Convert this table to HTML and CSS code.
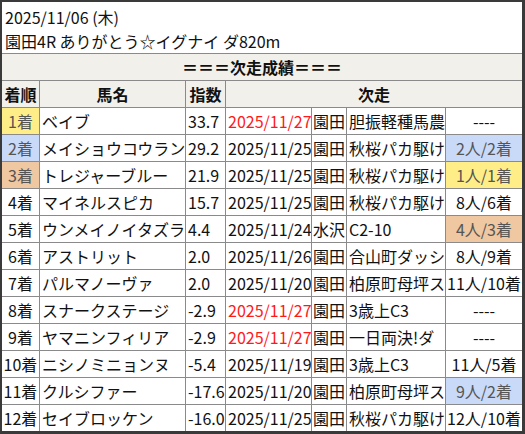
FILE: index.html
```html
<!DOCTYPE html>
<html lang="ja">
<head>
<meta charset="utf-8">
<title>次走成績</title>
<link rel="stylesheet" href="styles.css">
</head>
<body>
<div class="frame">
  <div class="title">
    <div>2025/11/06 (木)</div>
    <div>園田4R ありがとう☆イグナイ ダ820m</div>
  </div>
  <div class="grid">
    <div class="cell head span-all">＝＝＝次走成績＝＝＝</div>

    <div class="cell head">着順</div>
    <div class="cell head">馬名</div>
    <div class="cell head">指数</div>
    <div class="cell head span-next">次走</div>

    <div class="cell rank gold">1着</div><div class="cell">ベイブ</div><div class="cell">33.7</div><div class="cell date red">2025/11/27</div><div class="cell place">園田</div><div class="cell">胆振軽種馬農</div><div class="cell res">----</div>

    <div class="cell rank blue">2着</div><div class="cell">メイショウコウラン</div><div class="cell">29.2</div><div class="cell date">2025/11/25</div><div class="cell place">園田</div><div class="cell">秋桜パカ駆け</div><div class="cell res blue">2人/2着</div>

    <div class="cell rank bronze">3着</div><div class="cell">トレジャーブルー</div><div class="cell">21.9</div><div class="cell date">2025/11/25</div><div class="cell place">園田</div><div class="cell">秋桜パカ駆け</div><div class="cell res gold">1人/1着</div>

    <div class="cell rank">4着</div><div class="cell">マイネルスピカ</div><div class="cell">15.7</div><div class="cell date">2025/11/25</div><div class="cell place">園田</div><div class="cell">秋桜パカ駆け</div><div class="cell res">8人/6着</div>

    <div class="cell rank">5着</div><div class="cell">ウンメイノイタズラ</div><div class="cell">4.4</div><div class="cell date">2025/11/24</div><div class="cell place">水沢</div><div class="cell">C2-10</div><div class="cell res bronze">4人/3着</div>

    <div class="cell rank">6着</div><div class="cell">アストリット</div><div class="cell">2.0</div><div class="cell date">2025/11/26</div><div class="cell place">園田</div><div class="cell">合山町ダッシ</div><div class="cell res">8人/9着</div>

    <div class="cell rank">7着</div><div class="cell">パルマノーヴァ</div><div class="cell">2.0</div><div class="cell date">2025/11/20</div><div class="cell place">園田</div><div class="cell">柏原町母坪ス</div><div class="cell res">11人/10着</div>

    <div class="cell rank">8着</div><div class="cell">スナークステージ</div><div class="cell">-2.9</div><div class="cell date red">2025/11/27</div><div class="cell place">園田</div><div class="cell">3歳上C3</div><div class="cell res">----</div>

    <div class="cell rank">9着</div><div class="cell">ヤマニンフィリア</div><div class="cell">-2.9</div><div class="cell date red">2025/11/27</div><div class="cell place">園田</div><div class="cell">一日両決!ダ</div><div class="cell res">----</div>

    <div class="cell rank">10着</div><div class="cell">ニシノミニョンヌ</div><div class="cell">-5.4</div><div class="cell date">2025/11/19</div><div class="cell place">園田</div><div class="cell">3歳上C3</div><div class="cell res">11人/5着</div>

    <div class="cell rank">11着</div><div class="cell">クルシファー</div><div class="cell">-17.6</div><div class="cell date">2025/11/20</div><div class="cell place">園田</div><div class="cell">柏原町母坪ス</div><div class="cell res blue">9人/2着</div>

    <div class="cell rank">12着</div><div class="cell">セイブロッケン</div><div class="cell">-16.0</div><div class="cell date">2025/11/25</div><div class="cell place">園田</div><div class="cell">秋桜パカ駆け</div><div class="cell res">12人/10着</div>
  </div>
</div>
</body>
</html>
```

FILE: styles.css
```css
html, body {
  margin: 0;
  padding: 0;
}
body {
  background: #3a3a3a;
  font-family: "Noto Sans CJK JP", "Noto Sans", sans-serif;
  font-size: 16px;
  color: #111;
}
.frame {
  margin: 2px 3px 3px 2px;
  width: 520px;
  height: 429px;
  background: #ffffff;
  overflow: hidden;
}
.title {
  box-sizing: border-box;
  height: 52px;
  padding: 3px 3px 0;
  line-height: 24px;
  border-bottom: 1px solid #8a8a8a;
  white-space: nowrap;
}
.grid {
  display: grid;
  grid-template-columns: 37px 145px 39px 85px 34px 98px 76px;
  grid-auto-rows: 26px;
  gap: 1px;
  background: #8a8a8a;
}
.cell {
  background: #ffffff;
  line-height: 26px;
  padding-left: 2px;
  white-space: nowrap;
  overflow: hidden;
}
.head {
  background: #f2f0eb;
  font-weight: bold;
  text-align: center;
  padding-left: 0;
}
.span-all {
  grid-column: 1 / -1;
}
.span-next {
  grid-column: 4 / -1;
}
.rank {
  text-align: center;
  padding-left: 0;
}
.place {
  padding-left: 1px;
}
.res {
  text-align: center;
  padding-left: 0;
}
.red {
  color: #ff1a1a;
}
.gold {
  background: #ffee88;
  color: #555;
}
.blue {
  background: #c9daf8;
  color: #555;
}
.bronze {
  background: #efc7a0;
  color: #555;
}
```
